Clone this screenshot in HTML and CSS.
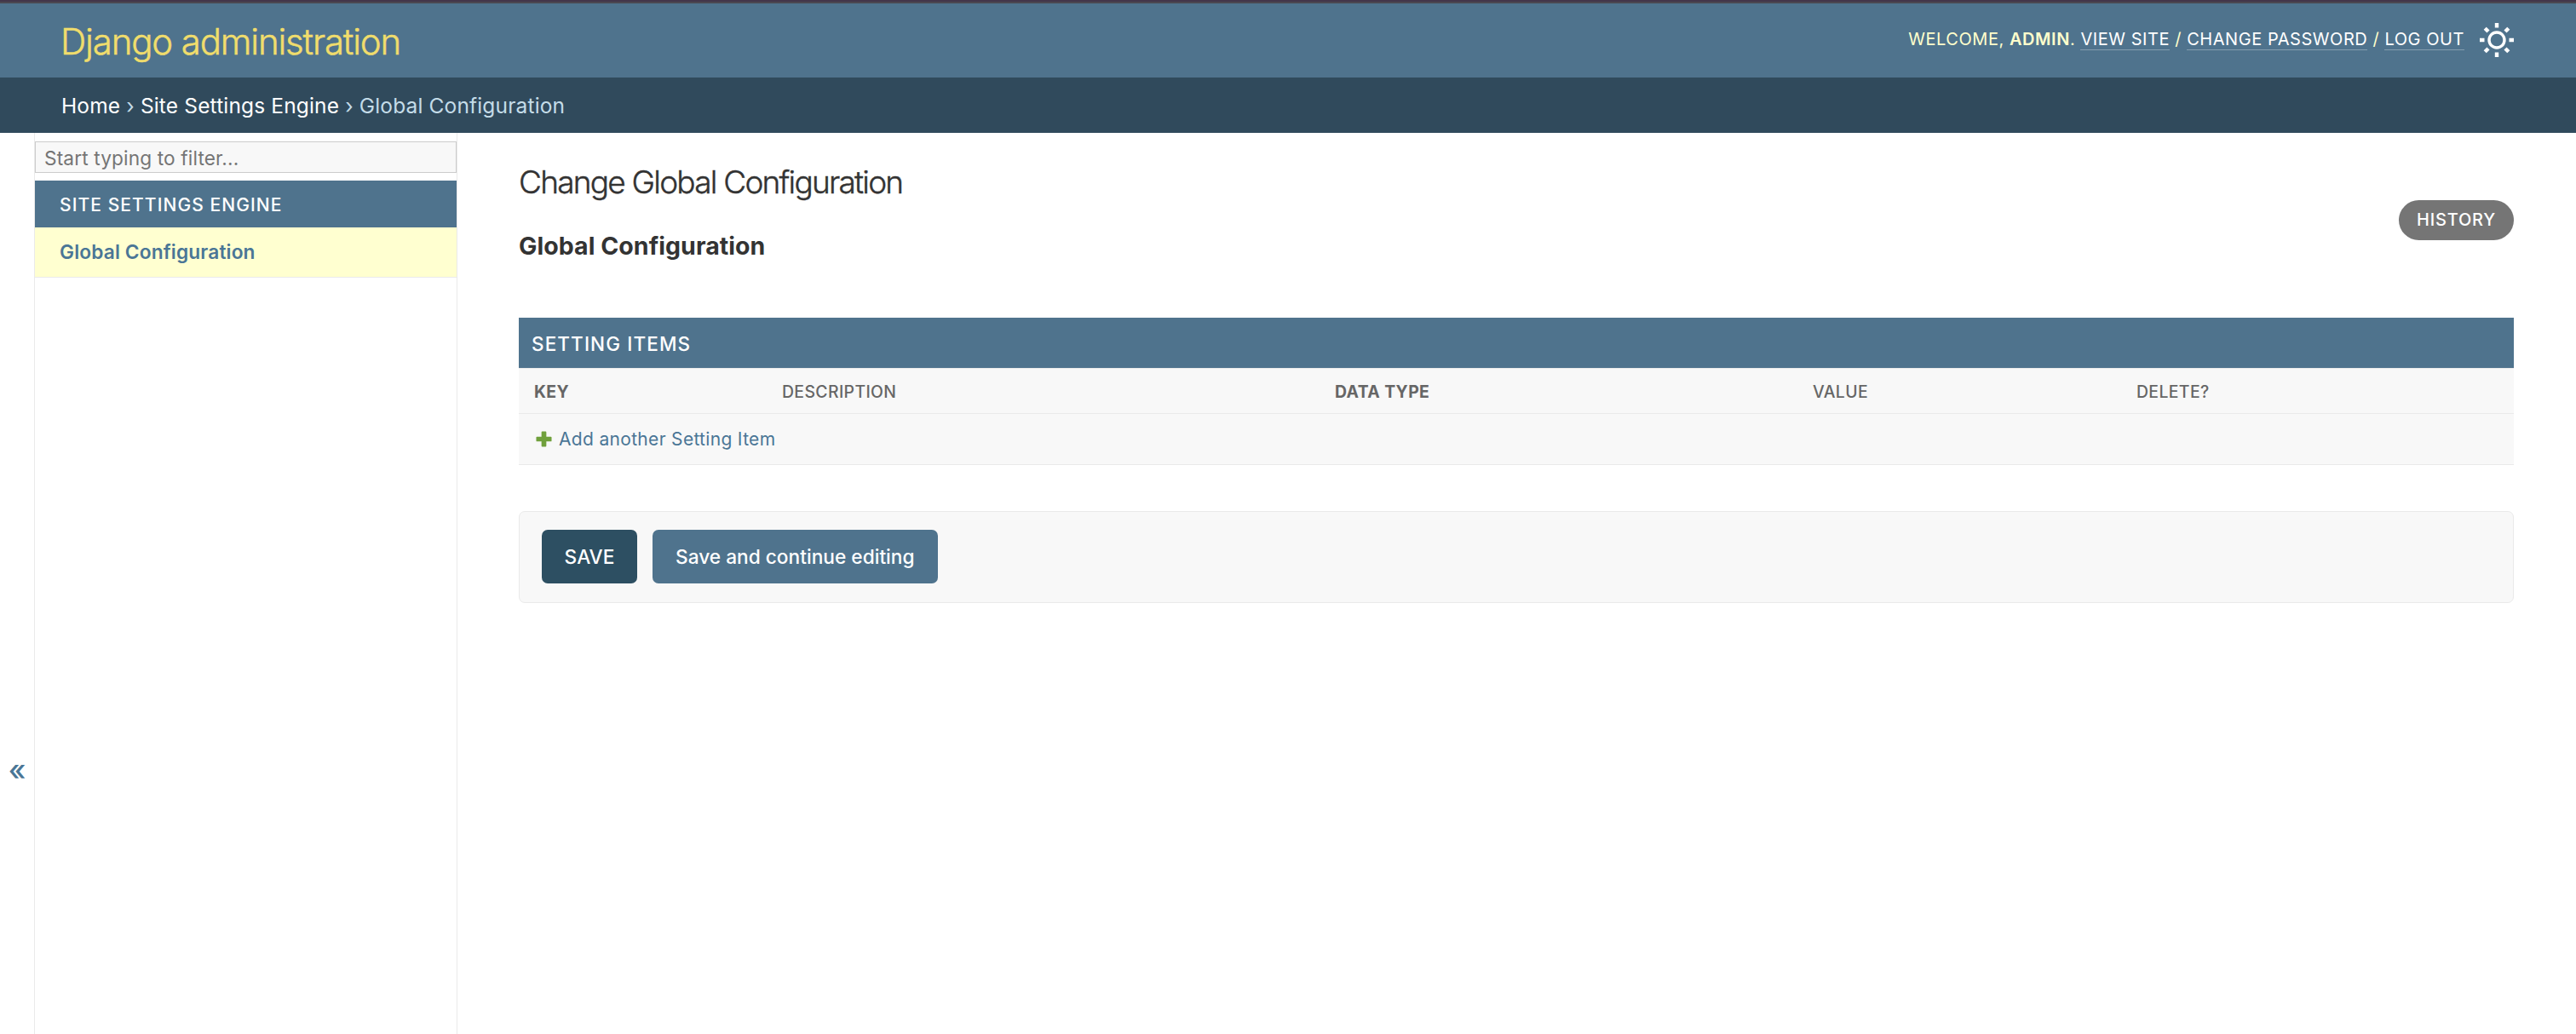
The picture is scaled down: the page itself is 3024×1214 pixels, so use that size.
FILE: index.html
```html
<!DOCTYPE html>
<html lang="en">
<head>
    <meta charset="UTF-8">
    <meta name="viewport" content="width=device-width, initial-scale=1.0">
    <title>Change Global Configuration | Django site admin</title>
    <link rel="stylesheet" href="styles.css">
</head>
<body>
    <header class="header">
        <div class="site-name"><a href="#">Django administration</a></div>
        <div class="user-tools">
            <div class="user-links">
                <span>Welcome,</span> <strong>admin</strong>.
                <a href="#">View site</a> /
                <a href="#">Change password</a> /
                <a href="#">Log out</a>
            </div>
            <button class="theme-toggle" aria-label="Toggle theme">
                <svg viewBox="0 0 42 42" fill="none" stroke="#fff">
                    <circle cx="21" cy="21" r="9" stroke-width="3.4"/>
                    <path stroke-width="4.4" d="M21 1v5.500M21 35.500v5.500M1 21h5.500M35.500 21h5.500M7.200 7.200l3.800 3.800M31 31l3.800 3.800M7.200 34.800l3.800-3.800M31 11l3.800-3.800"/>
                </svg>
            </button>
        </div>
    </header>

    <nav class="breadcrumbs">
        <a href="#">Home</a> &rsaquo; <a href="#">Site Settings Engine</a> &rsaquo; <span>Global Configuration</span>
    </nav>

    <div class="main">
        <button class="toggle-sidebar" aria-label="Toggle navigation">&laquo;</button>
        <nav class="sidebar">
            <input class="nav-filter" type="search" placeholder="Start typing to filter...">
            <div class="app-caption"><a href="#">Site Settings Engine</a></div>
            <div class="model-row"><a href="#">Global Configuration</a></div>
        </nav>

        <main class="content">
            <h1>Change Global Configuration</h1>
            <div class="object-row">
                <h2>Global Configuration</h2>
                <a class="history-link" href="#">History</a>
            </div>

            <form>
                <section class="inline-group">
                    <h3>Setting Items</h3>
                    <table class="items">
                        <thead>
                            <tr>
                                <th class="col-key required">Key</th>
                                <th class="col-description">Description</th>
                                <th class="col-type required">Data type</th>
                                <th class="col-value">Value</th>
                                <th class="col-delete">Delete?</th>
                            </tr>
                        </thead>
                        <tbody>
                            <tr>
                                <td colspan="5">
                                    <a class="add-row" href="#">
                                        <svg viewBox="0 0 20 20"><path fill="#70a03c" d="M7 1.500q0-1 1-1h4q1 0 1 1V7h5.500q1 0 1 1v4q0 1-1 1H13v5.500q0 1-1 1H8q-1 0-1-1V13H1.500q-1 0-1-1V8q0-1 1-1H7z"/></svg>
                                        <span>Add another Setting Item</span>
                                    </a>
                                </td>
                            </tr>
                        </tbody>
                    </table>
                </section>

                <div class="submit-row">
                    <button class="button default" type="button">SAVE</button>
                    <button class="button" type="button">Save and continue editing</button>
                </div>
            </form>
        </main>
    </div>
</body>
</html>
```
FILE: styles.css
```css
* {
    box-sizing: border-box;
}

body {
    margin: 0;
    height: 1214px;
    display: flex;
    flex-direction: column;
    overflow: hidden;
    font-family: Inter, Roboto, sans-serif;
    font-size: 23px;
    color: #333;
    background: #fff;
    border-top: 2px solid #43364a;
}

a {
    color: #4a7696;
    text-decoration: none;
}

h1, h2, h3 {
    margin: 0;
}

button {
    font-family: inherit;
    border: 0;
    padding: 0;
    cursor: pointer;
}

/* HEADER */
.header {
    height: 89px;
    flex: none;
    display: flex;
    justify-content: space-between;
    align-items: center;
    padding: 0 72px 0 71px;
    border-top: 2px solid #4b4851;
    background: #4f738d;
    color: #ffc;
}

.site-name {
    padding-top: 2px;
    font-size: 42px;
    font-weight: 300;
    letter-spacing: -1.16px;
    -webkit-text-stroke: 0.5px;
}

.site-name a {
    color: #f0dd6c;
}

.user-tools {
    display: flex;
    align-items: center;
    gap: 17px;
    padding-bottom: 2px;
}

.user-links {
    padding-bottom: 1px;
    font-size: 20px;
    line-height: 22px;
    letter-spacing: 0.55px;
    text-transform: uppercase;
}

.user-links strong {
    font-weight: 600;
}

.user-links a {
    color: #fff;
    border-bottom: 1px solid rgba(255, 255, 255, 0.3);
}

.theme-toggle {
    display: flex;
    background: none;
}

.theme-toggle svg {
    width: 42px;
    height: 42px;
}

/* BREADCRUMBS */
.breadcrumbs {
    height: 65px;
    flex: none;
    padding: 0 72px;
    line-height: 67px;
    font-size: 24.5px;
    letter-spacing: 0.15px;
    color: #c4dce8;
    background: #304a5c;
}

.breadcrumbs a {
    color: #fff;
}

/* SIDEBAR */
.main {
    flex: 1;
    display: flex;
}

.toggle-sidebar {
    width: 41px;
    padding-top: 436px;
    background: #fff;
    border-right: 1px solid #eaeaea;
    color: #4a7696;
    font-size: 34px;
    font-weight: 500;
}

.sidebar {
    width: 496px;
    flex: none;
    padding-top: 10px;
    border-right: 1px solid #eaeaea;
}

.nav-filter {
    display: block;
    width: 100%;
    height: 37px;
    margin-bottom: 9px;
    padding: 1px 10px 0;
    border: 1px solid #ccc;
    background: #f8f8f8;
    font-family: inherit;
    font-size: 22.7px;
    letter-spacing: 0.12px;
}

.nav-filter::placeholder {
    color: #757575;
}

.app-caption {
    height: 55px;
    padding-left: 29px;
    line-height: 57px;
    font-size: 21px;
    font-weight: 500;
    letter-spacing: 1.08px;
    text-transform: uppercase;
    background: #4f738d;
}

.app-caption a {
    color: #fff;
}

.model-row {
    height: 59px;
    padding-left: 29px;
    line-height: 58px;
    font-size: 22.7px;
    font-weight: 600;
    letter-spacing: 0.15px;
    background: #ffffd0;
    border-bottom: 1px solid #eaeaea;
}

/* CONTENT */
.content {
    flex: 1;
    padding: 36px 73px 0 72px;
}

h1 {
    font-size: 37px;
    line-height: 44px;
    font-weight: 300;
    letter-spacing: -1.77px;
    -webkit-text-stroke: 0.4px;
}

.object-row {
    display: flex;
    justify-content: space-between;
    margin-bottom: 65px;
}

h2 {
    margin-top: 32px;
    font-size: 28.5px;
    line-height: 41px;
    font-weight: 700;
    letter-spacing: 0.05px;
}

.history-link {
    height: 47px;
    width: 135px;
    margin-top: -1px;
    border-radius: 24px;
    background: #757575;
    color: #fff;
    font-size: 20px;
    font-weight: 500;
    letter-spacing: 0.8px;
    line-height: 46px;
    text-align: center;
    text-transform: uppercase;
}

.inline-group {
    margin-top: -1px;
}

h3 {
    height: 59px;
    padding-left: 15px;
    line-height: 62px;
    font-size: 22.5px;
    font-weight: 500;
    letter-spacing: 1.1px;
    text-transform: uppercase;
    background: #4f738d;
    color: #fff;
}

.items {
    width: 100%;
    border-spacing: 0;
    table-layout: fixed;
    background: #f8f8f8;
}

.items th {
    height: 54px;
    padding: 2px 0 0 18px;
    border-top: 1px solid #eaeaea;
    border-bottom: 1px solid #eaeaea;
    font-size: 19.4px;
    font-weight: 500;
    letter-spacing: 0.38px;
    text-align: left;
    text-transform: uppercase;
    color: #666;
}

.items th.required {
    font-weight: 700;
}

.col-key { width: 291px; }
.col-description { width: 649px; }
.col-type { width: 561px; }
.col-value { width: 380px; }

.items td {
    height: 60px;
    padding: 0 20px;
    border-bottom: 1px solid #eaeaea;
}

.add-row {
    display: flex;
    align-items: center;
    gap: 8px;
    font-size: 21px;
    letter-spacing: 0.32px;
}

.add-row svg {
    width: 19px;
    height: 19px;
}

/* SUBMIT ROW */
.submit-row {
    display: flex;
    gap: 18px;
    height: 108px;
    margin-top: 54px;
    padding: 21px 26px;
    border: 1px solid #eaeaea;
    border-radius: 7px;
    background: #f8f8f8;
}

.button {
    height: 63px;
    padding: 0 27px;
    border-radius: 7px;
    background: #4f738d;
    color: #fff;
    font-size: 22.7px;
    font-weight: 500;
}

.button.default {
    width: 112px;
    padding: 0;
    background: #2d4f62;
}
```
